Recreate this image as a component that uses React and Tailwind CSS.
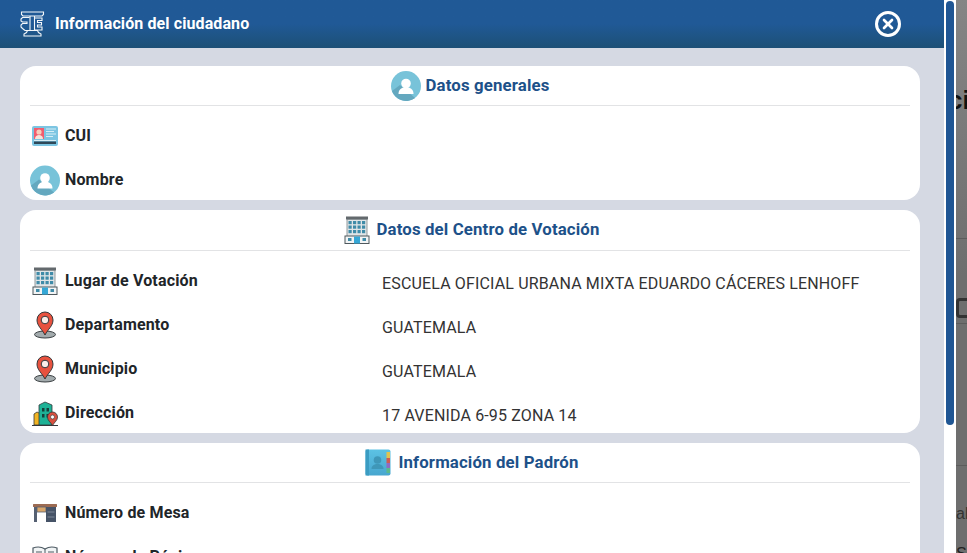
import { X } from 'lucide-react';

function LogoIcon() {
  return (
    <svg width="25" height="26" viewBox="0 0 25 26" fill="none" stroke="#f4f7fa" strokeWidth="1.100">
      <path d="M1.500 1h22v2.500l-1.500 1.500H3L1.500 3.500z" />
      <path d="M10 5v14.500M14.500 5v14.500" />
      <path d="M9.500 6.500H2.500L1 8v2l1.500 1H7v1.500H2.500L1 14v2l1.500 1.500L5 19.500h4.500" />
      <path d="M15 7h7v2.500h-4.500v2h4v2.500h-4v2H22V19h-7" />
      <path d="M7.500 19.500h10l1 2 2.500 1.500v2H4v-2l2.500-1.500z" />
    </svg>
  );
}

function PersonIcon({ size = 30 }) {
  return (
    <svg width={size} height={size} viewBox="0 0 30 30">
      <circle cx="15" cy="15" r="15" fill="#78c3d9" />
      <path d="M1 20L9 14L24 27A15 15 0 0 1 1 20z" fill="#64a8bf" />
      <circle cx="15" cy="12.500" r="4.800" fill="#fff" />
      <path d="M7.500 23c0-4 2.500-6 5-6.500h5c2.500.5 5 2.500 5 6.500z" fill="#fff" />
    </svg>
  );
}

function IdCardIcon() {
  return (
    <svg width="28" height="22" viewBox="0 0 28 22">
      <rect x="1" y="1" width="26" height="20" rx="2" fill="#7cc5e2" />
      <rect x="3" y="3" width="10" height="11" fill="#f25c6e" />
      <circle cx="8" cy="7" r="2.600" fill="#f7cdbb" />
      <path d="M4 14c0-3 2-4 4-4s4 1 4 4z" fill="#f5e3da" />
      <path d="M15 4h10M15 6.500h8M15 9h10M15 11.500h7M3 15.500h22" stroke="#d6eef6" strokeWidth="1" />
      <rect x="3" y="16.500" width="22" height="2.500" fill="#2e4858" />
    </svg>
  );
}

function BuildingIcon() {
  const windows = [];
  for (let r = 0; r < 3; r++) {
    for (let c = 0; c < 4; c++) {
      windows.push(<rect key={`${r}-${c}`} x={4.500 + c * 4.500} y={5 + r * 4.500} width="3.200" height="3.200" fill="#3f8ba8" />);
    }
  }
  return (
    <svg width="26" height="28" viewBox="0 0 26 28">
      <rect x="2" y="0.500" width="22" height="3" fill="#63696d" />
      <rect x="3" y="3.500" width="20" height="17" fill="#e1e5e7" stroke="#7b8488" strokeWidth="0.800" />
      {windows}
      <rect x="1" y="20" width="24" height="7.500" fill="#f2f4f5" stroke="#4f585d" strokeWidth="1" />
      <rect x="10" y="20.500" width="6" height="7" fill="#35a7d6" />
      <rect x="4" y="22" width="3.500" height="3" fill="#3f8ba8" />
      <rect x="18.500" y="22" width="3.500" height="3" fill="#3f8ba8" />
    </svg>
  );
}

function PinIcon() {
  return (
    <svg width="24" height="28" viewBox="0 0 24 28">
      <ellipse cx="12" cy="23.500" rx="10.500" ry="3.500" fill="#a3abad" stroke="#3a3f42" strokeWidth="1" />
      <path d="M12 24C9 18 4 15 4 9a8 8 0 0 1 16 0c0 6-5 9-8 15z" fill="#e8523f" stroke="#33383b" strokeWidth="1" />
      <circle cx="12" cy="9" r="3.800" fill="#fbeee9" stroke="#33383b" strokeWidth="1" />
    </svg>
  );
}

function CityPinIcon() {
  return (
    <svg width="28" height="27" viewBox="0 0 28 27">
      <path d="M3 25V14l3-2 4 2v11z" fill="#f0b323" stroke="#33383b" strokeWidth="0.800" />
      <path d="M8 25V5l6-3 7 3v20z" fill="#1eb296" stroke="#33383b" strokeWidth="0.800" />
      <path d="M11 8h2.500v3.500H11zM15.500 8H18v3.500h-2.500zM11 14h2.500v3.500H11zM15.500 14H18v3.500h-2.500z" fill="#163f3a" />
      <path d="M1 25.500h26" stroke="#33383b" strokeWidth="1" />
      <path d="M21.500 25.500c-2-3.500-5-5-5-8.500a5 5 0 0 1 10 0c0 3.500-3 5-5 8.500z" fill="#d8503f" stroke="#33383b" strokeWidth="0.800" />
      <circle cx="21.500" cy="17" r="2" fill="#fff" stroke="#33383b" strokeWidth="0.600" />
    </svg>
  );
}

function AgendaIcon() {
  return (
    <svg width="26" height="27" viewBox="0 0 26 27">
      <defs>
        <linearGradient id="agenda" x1="0" y1="0" x2="0" y2="1">
          <stop offset="0" stopColor="#5cc2e4" />
          <stop offset="1" stopColor="#47a6cf" />
        </linearGradient>
      </defs>
      <rect x="0.500" y="0.500" width="25" height="26" rx="2" fill="url(#agenda)" />
      <rect x="0.500" y="0.500" width="3.500" height="26" fill="#3b9cc2" />
      <rect x="21.500" y="3" width="3.500" height="6" fill="#e0c34f" />
      <rect x="21.500" y="9" width="3.500" height="5" fill="#cf5b53" />
      <rect x="21.500" y="14" width="3.500" height="5" fill="#8e6bc4" />
      <rect x="21.500" y="19" width="3.500" height="5" fill="#5bb98c" />
      <circle cx="12.500" cy="11" r="3.800" fill="#3f97b8" />
      <path d="M6.500 20c0-3.500 2.800-5 6-5s6 1.500 6 5z" fill="#3f97b8" />
    </svg>
  );
}

function DeskIcon() {
  return (
    <svg width="26" height="20" viewBox="0 0 26 20">
      <rect x="1" y="1" width="24" height="3" rx="0.500" fill="#9c6b52" />
      <rect x="2" y="4" width="3" height="15" fill="#556072" />
      <rect x="5" y="4" width="9" height="5" fill="#d9a66a" stroke="#556072" strokeWidth="0.800" />
      <rect x="14" y="4" width="10" height="15" fill="#465367" />
      <path d="M15.500 9h7M15.500 14h7" stroke="#7d8899" strokeWidth="1" />
    </svg>
  );
}

function BookIcon() {
  return (
    <svg width="28" height="24" viewBox="0 0 28 24">
      <path d="M14 4C10 1.500 6 1.500 2 3v18c4-1.500 8-1.500 12 1 4-2.500 8-2.500 12-1V3c-4-1.500-8-1.500-12 1z" fill="#f1f4f5" stroke="#4d5a63" strokeWidth="1.200" />
      <path d="M14 4v18M5 7h6M5 10h6M17 7h6M17 10h6" stroke="#4d5a63" strokeWidth="1" />
    </svg>
  );
}

function CardTitle({ icon, children, gap }) {
  return (
    <div className={`flex items-center justify-center border-b border-[#e2e3e5] ${gap}`}>
      {icon}
      <h2 className="text-[16.8px] font-bold tracking-[0.15px] text-[#1d5189]">{children}</h2>
    </div>
  );
}

function Row({ icon, label, value }) {
  return (
    <div className="grid h-11 shrink-0 grid-cols-[352px_1fr]">
      <div className="flex items-center">
        <div className="flex w-[35px] justify-center pr-[5px]">{icon}</div>
        <span className="text-base font-bold tracking-[0.15px] text-[#212529]">{label}</span>
      </div>
      {value && <div className="flex items-center pt-1.5 text-base tracking-[0.15px] text-[#333]">{value}</div>}
    </div>
  );
}

export default function App() {
  return (
    <div className="flex h-[553px] w-[967px] overflow-hidden font-['Roboto',sans-serif]">
      <div className="flex w-[944px] shrink-0 flex-col bg-[#d5d9e3]">
        <header className="flex h-12 shrink-0 items-center justify-between bg-gradient-to-b from-[#205996] via-[#205996] to-[#1d5076] pl-5 pr-[43px]">
          <div className="flex items-center gap-[10px]">
            <LogoIcon />
            <h1 className="text-base font-bold tracking-[0.1px] text-white">Información del ciudadano</h1>
          </div>
          <div className="flex h-[26px] w-[26px] items-center justify-center rounded-full border-[3px] border-white">
            <X size={16} strokeWidth={4} className="text-white" />
          </div>
        </header>

        <main className="flex min-h-0 flex-1 flex-col gap-2.5 overflow-hidden pl-5 pr-6 pt-[18px]">
          <section className="flex h-[134px] shrink-0 flex-col overflow-hidden rounded-2xl bg-white px-2.5">
            <CardTitle icon={<PersonIcon />} gap="h-10 shrink-0 gap-[5px]">Datos generales</CardTitle>
            <div className="pt-2">
              <Row icon={<IdCardIcon />} label="CUI" />
              <Row icon={<PersonIcon size={31} />} label="Nombre" />
            </div>
          </section>

          <section className="flex h-[223px] shrink-0 flex-col overflow-hidden rounded-2xl bg-white px-2.5">
            <CardTitle icon={<BuildingIcon />} gap="h-[41px] shrink-0 gap-[6px] pl-1">Datos del Centro de Votación</CardTitle>
            <div className="pt-2">
              <Row icon={<BuildingIcon />} label="Lugar de Votación" value="ESCUELA OFICIAL URBANA MIXTA EDUARDO CÁCERES LENHOFF" />
              <Row icon={<PinIcon />} label="Departamento" value="GUATEMALA" />
              <Row icon={<PinIcon />} label="Municipio" value="GUATEMALA" />
              <Row icon={<CityPinIcon />} label="Dirección" value="17 AVENIDA 6-95 ZONA 14" />
            </div>
          </section>

          <section className="flex shrink-0 flex-col rounded-t-2xl bg-white px-2.5">
            <CardTitle icon={<AgendaIcon />} gap="h-10 shrink-0 gap-[7px] pl-1">Información del Padrón</CardTitle>
            <div className="pt-2">
              <Row icon={<DeskIcon />} label="Número de Mesa" />
              <Row icon={<BookIcon />} label="Número de Página" />
            </div>
          </section>
        </main>
      </div>

      <div className="h-full w-3 shrink-0 bg-white px-0.5 pt-px">
        <div className="h-[424px] rounded-full bg-[#1f5694]" />
      </div>

      {/* pagina de atras, tapada por el fondo oscuro */}
      <div className="flex min-w-0 flex-1 flex-col overflow-hidden bg-gradient-to-b from-[#858585] via-[#6e6e6e] to-[#6e6e6e] font-['Liberation_Sans',sans-serif]">
        <div className="mt-[86px] h-7 shrink-0 -translate-x-[8px] whitespace-nowrap text-[26px] font-bold leading-7 text-[#111]">ci</div>
        <div className="mt-[124px] shrink-0 border-t border-[#5c5c5c]" />
        <div className="mt-[59px] h-[20px] w-[18px] shrink-0 rounded-sm border-[3px] border-[#333]" />
        <div className="mt-[5px] shrink-0 border-t border-[#5c5c5c]" />
        <div className="mt-[141px] shrink-0 border-t border-[#5c5c5c]" />
        <div className="mt-9 shrink-0 whitespace-nowrap text-base text-[#333]">ala</div>
        <div className="mt-4 shrink-0 text-base text-[#222]">S</div>
      </div>
    </div>
  );
}
